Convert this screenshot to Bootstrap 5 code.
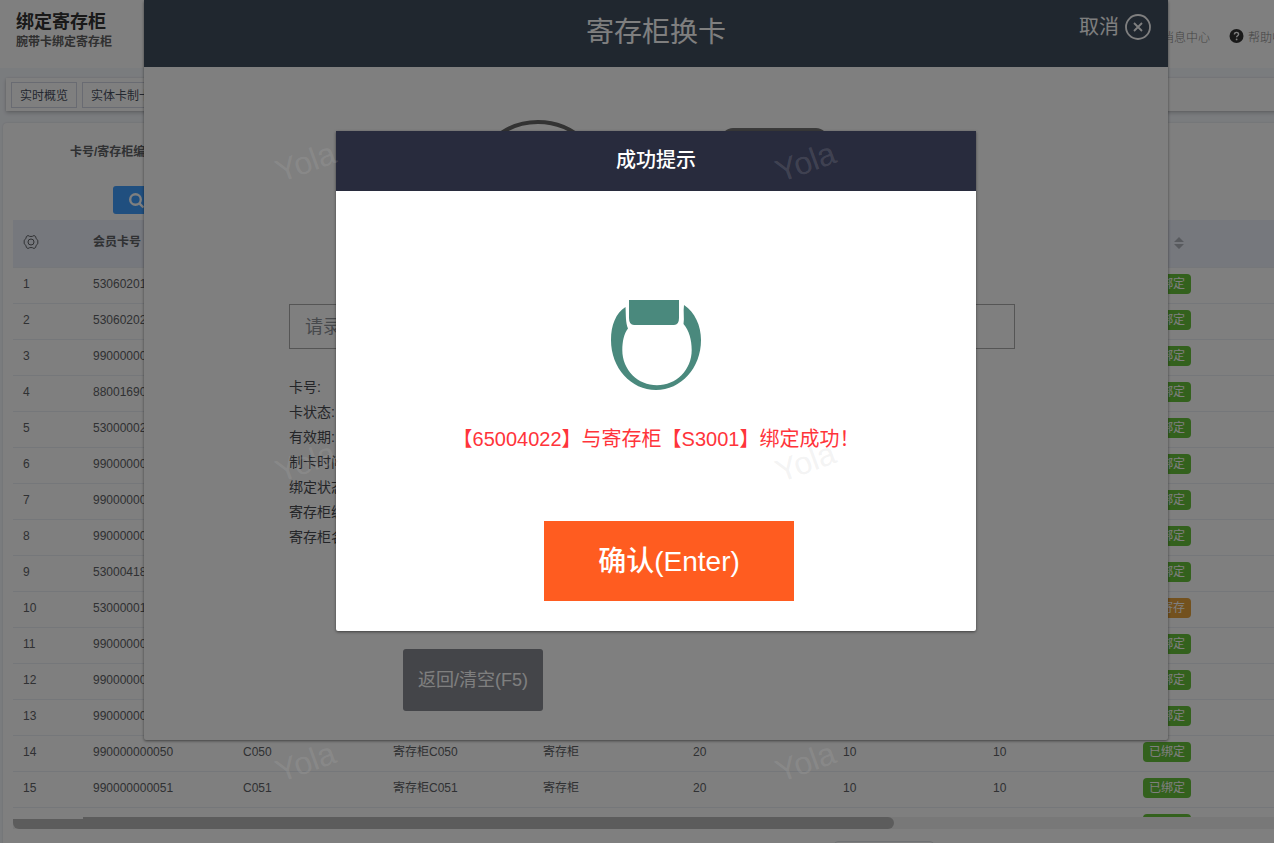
<!DOCTYPE html>
<html lang="zh-CN">
<head>
<meta charset="utf-8">
<meta name="viewport" content="width=device-width, initial-scale=1">
<title>绑定寄存柜</title>
<link href="https://cdn.jsdelivr.net/npm/bootstrap@5.3.0/dist/css/bootstrap.min.css" rel="stylesheet">
<style>
  body { font-family: "Liberation Sans", "Noto Sans CJK SC", sans-serif; font-size: 12px; line-height: 16px; color: #606266; overflow: hidden; }
  .shell { min-width: 1312px; height: 100vh; background: #f5f8fd; }
  .topbar { height: 68px; padding: 12px 16px 0; }
  .topbar h1 { font-size: 18px; line-height: 20px; color: #333; }
  .topbar .sub { color: #606060; }
  .toplinks { gap: 19px; padding-top: 17px; }
  .toplinks a { color: #888; font-weight: 300; gap: 4px; line-height: 18px; }
  .tabs-strip { margin: 10px 6px 0; padding: 4px 5px 3px; gap: 5px; box-shadow: 0 2px 4px rgba(0,0,0,.2), 0 0 2px rgba(0,0,0,.1); }
  .tab-btn { height: 26px; padding: 1px 8px 0; font-size: 12px; line-height: 24px; border: 1px solid #d3d7e4; border-radius: 0; color: #495060; }
  .panel { margin: 12px 3px 0; padding: 0 10px; border-radius: 4px; box-shadow: 0 0 2px rgba(0,0,0,.15); min-height: 720px; }
  .filter { height: 63px; padding: 21px 0 0 57px; }
  .filter input { width: 180px; height: 28px; font-size: 12px; }
  .search-btn { margin-left: 100px; width: 90px; height: 28px; padding: 0 15px; font-size: 12px; line-height: 26px; background: #409eff; color: #fff; border-radius: 3px; }
  .table-view { margin-top: 6px; height: 597px; overflow: hidden; }
  .lockers { width: 1870px; table-layout: fixed; margin: 0; color: #606266; }
  .lockers th, .lockers td { padding: 0 10px; vertical-align: middle; border-bottom: 1px solid #ebeef5; color: #606266; white-space: nowrap; }
  .lockers th { height: 47px; background: #ecf0fb; font-weight: 700; padding-bottom: 3px; }
  .lockers td { height: 36px; padding-bottom: 2px; }
  .lockers th svg { vertical-align: middle; }
  .tag { display: inline-block; width: 48px; height: 20px; line-height: 20px; border-radius: 4px; text-align: center; color: #fff; background: #67c23a; vertical-align: middle; }
  .tag.warn { background: #e6a23c; }
  .track { height: 12px; background: #f1f1f1; }
  .thumb { width: 881px; height: 12px; background: #b9b9b9; border-radius: 0 6px 6px 6px; }
  .thumb-cover { width: 70px; height: 2px; background: #fff; }
  .pager { margin: 12px auto 0; width: 100px; height: 28px; font-size: 12px; position: relative; left: 228px; }
  .dlg-outer { max-width: 1024px; height: 740px; box-shadow: 0 1px 3px rgba(0,0,0,.5); border-radius: 2px; }
  .dlg-head { height: 67px; background: #404e5f; color: #fff; font-size: 28px; line-height: 66px; }
  .cancel { top: 14px; right: 17px; gap: 6px; font-size: 20px; line-height: 26px; color: #fff; }
  .pics { height: 237px; padding-top: 53px; }
  .dlg-outer .entry { margin: 0 153px 0 145px; }
  .entry input { height: 45px; border: 1px solid #aaa; border-radius: 0; padding: 2px 15px 0; font-size: 18px; }
  .entry input::placeholder { color: #8f9399; }
  .info { padding: 26px 0 0 145px; font-size: 14px; line-height: 25px; color: #494b50; }
  .reset-btn { margin: 99px 0 0 259px; width: 140px; height: 62px; padding: 0; font-size: 18px; background: #888a92; color: #fff; border-radius: 3px; }
  .veil { background: rgba(0,0,0,.5); }
  .dlg-ok { max-width: 640px; height: 500px; margin-top: 131px; box-shadow: 0 1px 3px rgba(0,0,0,.5); border-radius: 0 0 2px 2px; }
  .dlg-ok .ok-head { height: 60px; background: #282b3d; color: #fff; font-size: 20px; line-height: 58px; font-weight: 500; }
  .ok-icon { margin: 109px auto 0; }
  .ok-msg { margin: 34px 0 0; font-size: 20px; line-height: 30px; color: #ff343a; }
  .ok-btn { margin: 67px 0 0 26px; width: 250px; height: 80px; padding: 2px 0 0; border-radius: 0; background: #ff5c20; color: #fff; font-size: 28px; font-weight: 500; }
  .ok-btn:hover { background: #f0541b; color: #fff; }
  .marks { padding: 12px 56px; pointer-events: none; display: grid; grid-template-columns: 500px 500px; grid-auto-rows: 300px; place-items: center; font-size: 32px; line-height: 36px; color: rgba(190,190,190,.18); }
  .marks span { transform: rotate(-20deg); }
</style>
</head>
<body>
<div class="shell position-relative overflow-hidden">

  <header class="topbar bg-white d-flex justify-content-between align-items-start">
    <div>
      <h1 class="m-0 fw-bold">绑定寄存柜</h1>
      <div class="sub fw-bold mt-1 lh-1">腕带卡绑定寄存柜</div>
    </div>
    <nav class="toplinks d-flex">
      <a href="#" class="text-decoration-none">消息中心</a>
      <a href="#" class="text-decoration-none d-flex">
        <svg width="15" height="15" viewBox="0 0 15 15" aria-hidden="true"><circle cx="7.500" cy="7" r="7" fill="#333"/><path d="M5.400 5.500c0-3 4.300-2.700 4.200-.2 0 1.500-2 1.500-2 3" fill="none" stroke="#fff" stroke-width="1.400"/><circle cx="7.600" cy="10.400" r=".9" fill="#fff"/></svg>
        帮助中心
      </a>
    </nav>
  </header>

  <div class="tabs-strip bg-white d-flex">
    <button type="button" class="btn tab-btn">实时概览</button>
    <button type="button" class="btn tab-btn">实体卡制卡</button>
  </div>

  <main class="panel bg-white">
    <form class="filter d-flex align-items-start gap-2">
      <label for="q" class="fw-bold">卡号/寄存柜编号</label>
      <input id="q" class="form-control form-control-sm" type="text">
    </form>
    <button type="button" class="btn search-btn d-flex align-items-center gap-1 border-0">
      <svg width="17" height="17" viewBox="0 0 17 17" fill="none" stroke="#fff" stroke-width="2.400" aria-hidden="true"><circle cx="7.500" cy="7.500" r="5.300"/><path d="M11.300 11.300l4.200 4.200"/></svg>
      查询
    </button>

    <div class="table-view">
      <table class="lockers table">
        <colgroup><col style="width:70px"><col span="12" style="width:150px"></colgroup>
        <thead>
          <tr>
            <th scope="col"><svg width="16" height="16" viewBox="0 0 16 16" fill="none" stroke="#606266" stroke-linejoin="round" aria-label="列设置"><path d="M5 1.500q1.300 1 3 1t3-1l1.600 1q0 2.500 2.200 3.700v3.600q-2.200 1.200-2.200 3.700l-1.600 1q-1.300-1-3-1t-3 1l-1.600-1q0-2.500-2.200-3.700V6.200q2.200-1.200 2.200-3.700z"/><circle cx="8" cy="8" r="3"/></svg></th>
            <th scope="col">会员卡号</th><th></th><th></th><th></th><th></th><th></th><th></th>
            <th scope="col">状态 <svg class="ms-1" width="10" height="14" viewBox="0 0 10 14" fill="#b0b4bd" aria-hidden="true"><path d="M5 1l5 5H0zM5 13l5-5H0z"/></svg></th>
            <th></th><th></th><th></th><th></th>
          </tr>
        </thead>
        <tbody id="rows"></tbody>
      </table>
    </div>
    <div class="track"><div class="thumb"><div class="thumb-cover"></div></div></div>
    <select class="pager form-select form-select-sm" aria-label="每页条数"><option>20条/页</option></select>
  </main>

  <div class="position-absolute top-0 start-0 w-100">
    <section class="dlg-outer bg-white mx-auto position-relative" role="dialog" aria-label="寄存柜换卡">
      <div class="dlg-head text-center">寄存柜换卡</div>
      <button type="button" class="cancel btn p-0 border-0 position-absolute d-flex align-items-center">取消
        <svg width="26" height="26" viewBox="0 0 26 26" fill="none" stroke="#fff" stroke-width="1.800" aria-hidden="true"><circle cx="13" cy="13" r="12"/><path d="M9 9l8 8M17 9l-8 8"/></svg>
      </button>
      <div class="pics">
        <svg class="d-block mx-auto" width="372" height="140" viewBox="0 0 372 140" aria-hidden="true"><circle cx="68" cy="68" r="66" fill="none" stroke="#666" stroke-width="4"/><rect x="251" y="8" width="107" height="120" rx="12" fill="#777"/></svg>
      </div>
      <div class="entry"><input type="text" class="form-control" placeholder="请录入卡号" aria-label="卡号"></div>
      <div class="info">
        <div>卡号:</div><div>卡状态:</div><div>有效期:</div><div>制卡时间:</div><div>绑定状态:</div><div>寄存柜编号:</div><div>寄存柜名称:</div>
      </div>
      <button type="button" class="btn reset-btn border-0">返回/清空(F5)</button>
    </section>
  </div>

  <div class="veil position-absolute top-0 start-0 w-100 h-100">
    <section class="dlg-ok bg-white mx-auto text-center" role="dialog" aria-modal="true" aria-labelledby="okTitle">
      <div class="ok-head" id="okTitle">成功提示</div>
      <svg class="ok-icon d-block" width="90" height="90" viewBox="0 0 90 90" fill="#4a897d" aria-hidden="true">
        <path d="M18 0h50v18q0 7-5 7H23q-5 0-5-7z"/>
        <path d="M14.500 7C5 13 0 25 0 40c0 28 20 50 45 50s45-22 45-50C90 26 84 12 73 5c-1 7 .5 13-.5 19 5.500 6 8.200 16 8.200 26 0 20-15.700 35.300-34.700 35.300S11.300 70 11.300 50c0-8 1.700-17 5.700-21.500-2.500-6-2-13-2.500-21.500z"/>
      </svg>
      <p class="ok-msg">【65004022】与寄存柜【S3001】绑定成功！</p>
      <button type="button" class="btn ok-btn border-0">确认(Enter)</button>
    </section>
  </div>

  <div class="marks position-absolute top-0 start-0 w-100" aria-hidden="true">
    <span>Yola</span><span>Yola</span><span>Yola</span><span>Yola</span><span>Yola</span><span>Yola</span>
  </div>
</div>
<script src="https://cdn.jsdelivr.net/npm/bootstrap@5.3.0/dist/js/bootstrap.bundle.min.js"></script>
<script>
  const cards = ['53060201', '53060202', '99000000', '88001690', '53000002', '99000000', '99000000', '99000000',
    '53000418', '53000001', '99000000', '99000000', '99000000', '990000000050', '990000000051', ''];
  const lockers = { 13: 'C050', 14: 'C051' };
  document.getElementById('rows').innerHTML = cards.map((card, i) => {
    const code = lockers[i];
    const mid = code ? [code, '寄存柜' + code, '寄存柜', 20, 10, 10] : ['', '', '', '', '', ''];
    const tag = i === 9 ? '<span class="tag warn">可寄存</span>' : '<span class="tag">' + (card ? '已绑定' : '') + '</span>';
    return '<tr>' + [card ? i + 1 : '', card, ...mid, tag, '', '', '', ''].map(v => '<td>' + v + '</td>').join('') + '</tr>';
  }).join('');
</script>
</body>
</html>
